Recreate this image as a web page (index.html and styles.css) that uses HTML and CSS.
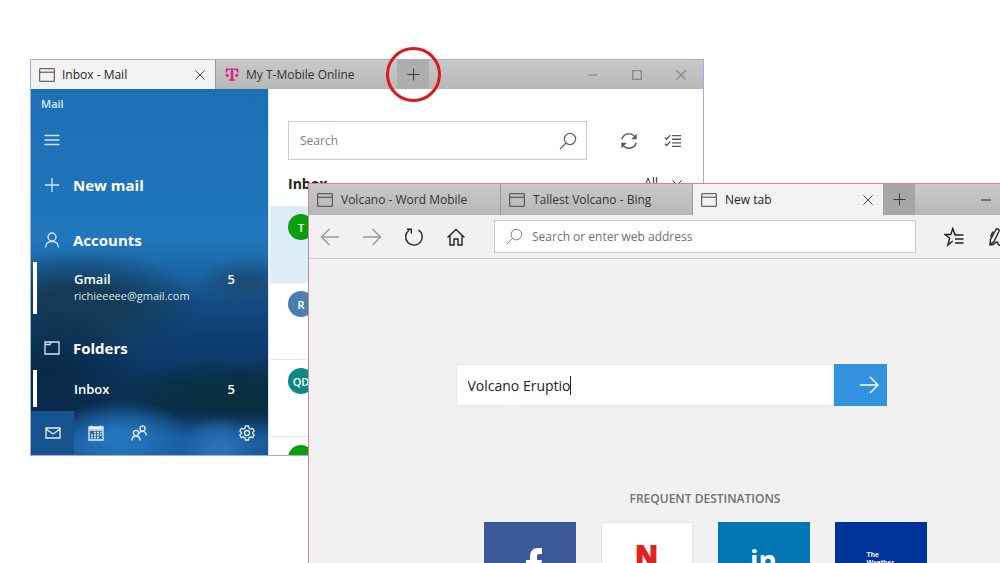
FILE: index.html
```html
<!DOCTYPE html>
<html lang="en">
<head>
<meta charset="utf-8">
<title>Tabbed windows</title>
<link rel="stylesheet" href="styles.css">
</head>
<body>
<svg class="defs" aria-hidden="true">
  <symbol id="i-window" viewBox="0 0 16 14"><path d="M.7.7h14.6v12.6H.7zM.7 4.200h14.600"/></symbol>
  <symbol id="i-close" viewBox="0 0 10 10"><path d="M.5.5l9 9M9.500.5l-9 9"/></symbol>
  <symbol id="i-plus" viewBox="0 0 14 14"><path d="M7 .5v13M.5 7h13"/></symbol>
  <symbol id="i-search" viewBox="0 0 18 18"><circle cx="11" cy="7" r="5.600"/><path d="M7 11l-6 6"/></symbol>
  <symbol id="i-arrow" viewBox="0 0 20 18"><path d="M1 9h18M11 1l8 8-8 8"/></symbol>
</svg>
<main class="desktop">
  <section class="mail" aria-label="Mail window">
    <header class="strip mail-strip">
      <div class="tab mail-tab active"><svg class="ic-win"><use href="#i-window"/></svg><span>Inbox - Mail</span><button class="close" aria-label="Close tab"><svg class="ic-x"><use href="#i-close"/></svg></button></div>
      <div class="tab mail-tab second"><svg class="ic-t" viewBox="0 0 16 16" aria-hidden="true"><path d="M1 1h14l.3 5h-1.200C13.800 3.500 12.500 2.300 9.500 2.200v9.800c0 1.500.6 1.900 2.200 2v1H4.300v-1c1.600-.1 2.200-.5 2.200-2V2.200C3.500 2.300 2.200 3.500 1.900 6H.7z"/><path d="M1 7.500h3v3H1zM12 7.500h3v3h-3z"/></svg><span>My T-Mobile Online</span></div>
      <div class="new-wrap"><button class="new" aria-label="New tab"><svg class="ic-plus"><use href="#i-plus"/></svg></button><i class="ring"></i></div>
      <div class="controls mail-controls">
        <button aria-label="Minimize"><svg viewBox="0 0 10 10"><path d="M.5 5h9"/></svg></button>
        <button aria-label="Maximize"><svg viewBox="0 0 10 10"><path d="M.7.7h8.600v8.600H.7z"/></svg></button>
        <button aria-label="Close"><svg viewBox="0 0 10 10"><path d="M.5.5l9 9M9.500.5l-9 9"/></svg></button>
      </div>
    </header>
    <div class="mail-body">
      <nav class="side">
        <p class="app">Mail</p>
        <button class="row burger" aria-label="Menu"><svg class="ic-side" viewBox="0 0 16 16"><path d="M.5 3.500h15M.5 8h15M.5 12.500h15"/></svg></button>
        <button class="row compose"><svg class="ic-side" viewBox="0 0 16 16"><path d="M8 1v14M1 8h14"/></svg>New mail</button>
        <button class="row accounts"><svg class="ic-side" viewBox="0 0 16 16"><circle cx="8" cy="5" r="4"/><path d="M1.500 15.500c.2-3.500 2.500-6 6.500-6s6.300 2.500 6.500 6"/></svg>Accounts</button>
        <a class="entry gmail" href="#"><span><b>Gmail</b><small>richieeeee@gmail.com</small></span><b class="count">5</b></a>
        <button class="row folders"><svg class="ic-side" viewBox="0 0 16 16"><path d="M1 2h14v12H1zM1 4.500h5L7.500 2"/></svg>Folders</button>
        <a class="entry inbox" href="#"><b>Inbox</b><b class="count">5</b></a>
        <div class="dock">
          <button class="on" aria-label="Mail"><svg viewBox="0 0 16 16"><path d="M1 3h14v10H1zM1 4l7 5 7-5"/></svg></button>
          <button aria-label="Calendar"><svg viewBox="0 0 16 16"><path d="M1 2h14v13H1zM1 3.500h14M1 5.200h14M3.500.5v2M12.500.5v2"/><path class="dots" d="M6 7.500h2M9 7.500h2M12 7.500h1.500M3 10h2M6 10h2M9 10h2M12 10h1.500M3 12.500h2M6 12.500h2M9 12.500h2"/></svg></button>
          <button aria-label="People"><svg viewBox="0 0 16 16"><circle cx="11.500" cy="3.500" r="2.600"/><path d="M8 8.500c1-2.800 6.500-3.300 7.300 2"/><circle cx="5" cy="8" r="2.600"/><path d="M.8 15.500c.4-6 8-6 8.400 0"/></svg></button>
          <button class="gear" aria-label="Settings"><svg viewBox="0 0 16 16"><path d="M6.500 1h3l.6 2.200 1.400.8 2.200-.6 1.500 2.600L13.600 7.600v.8l1.600 1.600-1.500 2.600-2.200-.6-1.400.8L9.500 15h-3l-.6-2.200-1.400-.8-2.200.6L.8 10l1.600-1.600v-.8L.8 6l1.500-2.600 2.200.6 1.400-.8z"/><circle cx="8" cy="8" r="2.500"/></svg></button>
        </div>
      </nav>
      <div class="list">
        <div class="tools">
          <label class="find"><input type="text" placeholder="Search" aria-label="Search mail"><svg class="ic-find"><use href="#i-search"/></svg></label>
          <button aria-label="Sync"><svg viewBox="0 0 20 20"><path d="M2 8c1.200-4 4.200-6 8-6 3 0 5.500 1.500 7 4M18 12c-1.200 4-4.200 6-8 6-3 0-5.500-1.500-7-4"/><path class="fill" d="M18.500 2v6h-6zM1.500 18v-6h6z"/></svg></button>
          <button aria-label="Select"><svg viewBox="0 0 20 20"><path d="M9 4h10M9 8h10M9 12h10M9 16h10M1 6l2 2 4-4.500M1 13l2 2 4-4.500"/></svg></button>
        </div>
        <div class="heading"><h2>Inbox</h2><button class="filter">All <svg viewBox="0 0 10 6"><path d="M.5.5L5 5 9.500.5"/></svg></button></div>
        <ul class="messages">
          <li class="selected"><span class="avatar green">T</span></li>
          <li><span class="avatar blue">R</span></li>
          <li><span class="avatar teal">QD</span></li>
          <li><span class="avatar green">T</span></li>
        </ul>
      </div>
    </div>
  </section>

  <section class="edge" aria-label="Browser window">
    <header class="strip edge-strip">
      <div class="tab edge-tab"><svg class="ic-win"><use href="#i-window"/></svg><span>Volcano - Word Mobile</span></div>
      <div class="tab edge-tab"><svg class="ic-win"><use href="#i-window"/></svg><span>Tallest Volcano - Bing</span></div>
      <div class="tab edge-tab active"><svg class="ic-win"><use href="#i-window"/></svg><span>New tab</span><button class="close" aria-label="Close tab"><svg class="ic-x"><use href="#i-close"/></svg></button></div>
      <button class="new" aria-label="New tab"><svg class="ic-plus"><use href="#i-plus"/></svg></button>
      <div class="controls edge-controls">
        <button aria-label="Minimize"><svg viewBox="0 0 10 10"><path d="M0 5h10"/></svg></button>
        <button aria-label="Maximize"><svg viewBox="0 0 10 10"><path d="M.5.5h9v9h-9z"/></svg></button>
        <button aria-label="Close"><svg viewBox="0 0 10 10"><path d="M.5.5l9 9M9.500.5l-9 9"/></svg></button>
      </div>
    </header>
    <div class="bar">
      <button class="dim" aria-label="Back"><svg viewBox="0 0 20 20"><path d="M19 10H1.500M9.500 2l-8 8 8 8"/></svg></button>
      <button class="dim" aria-label="Forward"><svg viewBox="0 0 20 20"><path d="M1 10h17.500M10.500 2l8 8-8 8"/></svg></button>
      <button aria-label="Refresh"><svg viewBox="0 0 20 20"><path d="M5 3.200a8.300 8.300 0 1 0 9.500-.3M3 2.200h4.300v4.300"/></svg></button>
      <button aria-label="Home"><svg viewBox="0 0 20 20"><path d="M1.500 10.500L10 2.500l8.500 8M4 8.500v9.500h4v-6h4v6h4V8.500"/></svg></button>
      <label class="address"><svg class="ic-addr"><use href="#i-search"/></svg><input type="text" placeholder="Search or enter web address" aria-label="Address"></label>
      <button aria-label="Favorites"><svg viewBox="0 0 20 20"><path d="M12.500 7.500h-1.700L8.800 1.500 6.800 7.500H1l4.700 3.800L3.800 18l5-4M11 8h8.500M11 12h8.500M11 16h8.500"/></svg></button>
      <button aria-label="Notes"><svg viewBox="0 0 20 20"><path d="M4 17.500l.5-5L10 2.500c1-1.500 3.800 0 3 1.800L8 14.500zM7 4.500l-2.500 5M4 17.500c4 2 5-3 7-2.500s0 3 2 3 2.500-2 5-2"/></svg></button>
      <button aria-label="Share"><svg viewBox="0 0 20 20"><path d="M3 9v9h14V9M10 13V2M6 6l4-4 4 4"/></svg></button>
      <button aria-label="More"><svg viewBox="0 0 20 20"><path d="M3 10h2M9 10h2M15 10h2"/></svg></button>
    </div>
    <div class="page">
      <form class="query">
        <label class="query-box"><input type="text" value="Volcano Eruptio" size="11" aria-label="Search the web"><i class="caret"></i></label>
        <button type="button" aria-label="Go"><svg viewBox="0 0 20 18"><use href="#i-arrow"/></svg></button>
      </form>
      <h3>FREQUENT DESTINATIONS</h3>
      <div class="tiles">
        <a class="tile facebook" href="#" aria-label="Facebook"><svg viewBox="0 0 92 92"><path d="M46 60V44h-4v-6h4v-3c0-6 3-9 8-9h4v6h-2.500c-2.200 0-2.500 1-2.500 2.500V38h5l-1 6h-4v16z"/></svg></a>
        <a class="tile netflix" href="#">N</a>
        <a class="tile linkedin" href="#">in</a>
        <a class="tile weather" href="#">The<br>Weather<br>Channel</a>
      </div>
    </div>
  </section>
</main>
</body>
</html>
```
FILE: styles.css
```css
* { box-sizing: border-box; }
body { margin: 0; background: #fff; font-family: "Open Sans", "Noto Sans", sans-serif; color: #222; }
button { border: 0; padding: 0; margin: 0; background: none; font: inherit; color: inherit; display: flex; align-items: center; justify-content: center; }
input { border: 0; padding: 0; margin: 0; background: none; font: inherit; color: inherit; outline: 0; min-width: 0; }
a { color: inherit; text-decoration: none; }
svg { fill: none; stroke: currentColor; flex: none; }
.defs { display: none; }
.desktop { position: relative; height: 100vh; overflow: hidden; }

.strip { display: flex; background: linear-gradient(#c9c9c9, #b7b7b7); }
.tab { display: flex; align-items: center; white-space: nowrap; padding-left: 8px; color: #333; }
.tab.active { background: #f2f2f2; color: #222; }
.tab .close { margin-left: auto; width: 30px; height: 100%; color: #444; }
.ic-win { width: 16px; height: 14px; margin-right: 8px; color: #444; }
.ic-x { width: 10px; height: 10px; }
.ic-plus { width: 13px; height: 13px; }
.new { height: 100%; width: 32px; background: #a6a6a6; color: #333; }
.controls { display: flex; margin-left: auto; }
.controls svg { width: 10px; height: 10px; }

.mail { position: absolute; left: 30px; top: 59px; width: calc(67% + 4px); height: 397px; border: 1px solid #a8aad8; background: #fff; display: flex; flex-direction: column; }
.mail-strip { height: 29px; font-size: 12px; flex: none; }
.mail-strip .ic-win { margin-right: 7px; }
.mail-tab { width: 184px; }
.second { padding-left: 9px; border-left: 1px solid #999; width: 182px; }
.ic-t { width: 14px; height: 15px; margin-right: 7px; fill: #d8207c; stroke: none; }
.new-wrap { position: relative; }
.mail-strip .new { background: #adadad; }
.ring { position: absolute; left: -11px; top: -13px; width: 55px; height: 55px; border: 3px solid #d91a1a; border-radius: 50%; }
.mail-controls { color: #888; stroke-width: 1.300; }
.mail-controls button { width: 44px; }
.mail-body { display: flex; flex: 1; min-height: 0; }

.side { width: 237px; color: #fff; display: flex; flex-direction: column;
  background:
    radial-gradient(ellipse 70px 40px at 90px 350px, #2375bd 20%, transparent 100%),
    radial-gradient(ellipse 40px 36px at 188px 362px, #2a72b2 20%, transparent 100%),
    radial-gradient(ellipse 130px 34px at 210px 306px, #082f40 30%, transparent 100%),
    radial-gradient(ellipse 90px 70px at 20px 285px, #082946 10%, transparent 100%),
    radial-gradient(ellipse 120px 58px at 50px 218px, #143a55 30%, transparent 100%),
    radial-gradient(ellipse 50px 26px at 216px 194px, #1a4a75 10%, transparent 100%),
    linear-gradient(#1d6fb5 0, #2077bb 150px, #1c65a4 185px, #124b83 215px, #0d3b6c 260px, #0a2d50 320px, #1a5c9d 350px, #1b5a98 100%); }
.app { margin: 0; height: 30px; line-height: 30px; padding-left: 10px; font-size: 11px; font-weight: 600; color: #dcecf8; }
.row { justify-content: flex-start; padding-left: 13px; font-size: 15px; font-weight: 700; text-align: left; }
.ic-side { width: 16px; height: 16px; margin-right: 13px; stroke-width: 1.300; color: #d5e6f5; }
.burger { height: 42px; }
.compose { height: 48px; }
.accounts { height: 53px; padding-top: 8px; }
.folders { height: 56px; padding-top: 12px; }
.entry { display: flex; justify-content: space-between; margin-left: 2px; border-left: 4px solid #fff; padding: 0 33px 0 37px; font-size: 13px; line-height: 18px; }
.entry small { display: block; font-size: 11px; line-height: 16px; font-weight: 400; color: #dbe5ee; }
.entry b { font-weight: 600; }
.gmail { height: 52px; padding-top: 8px; }
.inbox { height: 37px; align-items: center; }
.dock { margin-top: auto; height: 44px; display: flex; }
.dock button { width: 43px; }
.dock .on { background: #15548f; }
.dock .gear { margin-left: auto; }
.dock svg { width: 16px; height: 16px; stroke-width: 1.300; color: #e6eef6; }
.dots { stroke-width: 1.700; }

.list { flex: 1; min-width: 0; display: flex; flex-direction: column; border-left: 1px solid #d8e4f0; }
.tools { display: flex; padding: 32px 8px 0 19px; }
.find { flex: 1; display: flex; align-items: center; height: 39px; border: 1px solid #ccc; padding: 0 9px 0 11px; margin-right: 20px; font-size: 12px; }
.find input { flex: 1; }
.find input::placeholder { color: #808080; opacity: 1; }
.ic-find { width: 18px; height: 18px; color: #666; stroke-width: 1.300; }
.tools button { width: 44px; color: #555; }
.tools button svg { width: 18px; height: 18px; stroke-width: 1.500; }
.fill { fill: currentColor; stroke: none; }
.heading { display: flex; justify-content: space-between; align-items: center; height: 46px; padding: 1px 21px 0 19px; }
.heading h2 { margin: 0; font-size: 14px; font-weight: 700; }
.filter { font-size: 12px; gap: 14px; padding-bottom: 2px; }
.filter svg { width: 10px; height: 6px; }
.messages { list-style: none; margin: 0; padding: 0 0 0 1px; flex: 1; min-height: 0; overflow: hidden; }
.messages li { height: 77px; padding: 8px 0 0 18px; border-bottom: 1px solid #e4e4e4; }
.messages .selected { background: #dcecf9; }
.avatar { display: flex; align-items: center; justify-content: center; width: 26px; height: 26px; border-radius: 50%; color: #fff; font-size: 11px; font-weight: 600; }
.green { background: #0a9f0a; }
.blue { background: #4b7fb0; }
.teal { background: #0b8a82; }

.edge { position: absolute; left: 308px; top: 183px; right: -102px; bottom: -60px; border: 1px solid #cf8499; background: #f1f1f1; display: flex; flex-direction: column; }
.edge-strip { height: 31px; font-size: 12px; flex: none; }
.edge-tab { width: 192px; border-right: 1px solid #999; }
.edge-tab.active { width: 190px; border-right: 0; }
.edge-controls button { width: 46px; }
.bar { display: flex; align-items: center; height: 44px; border-bottom: 1px solid #d0d0d0; flex: none; }
.bar button { width: 42px; height: 42px; color: #222; }
.bar button svg { width: 20px; height: 20px; stroke-width: 1.400; }
.bar .dim { color: #999; }
.address { flex: 1; display: flex; align-items: center; height: 33px; margin: 0 17px; border: 1px solid #ccc; background: #fff; padding-left: 11px; font-size: 12px; }
.address input { flex: 1; }
.address input::placeholder { color: #707070; opacity: 1; }
.ic-addr { width: 17px; height: 17px; margin-right: 9px; color: #777; }
.page { display: flex; flex-direction: column; align-items: center; padding-top: 105px; }
.query { display: flex; width: 431px; height: 42px; margin-right: 68px; }
.query-box { flex: 1; display: flex; align-items: center; background: #fff; border: 1px solid #e6e6e6; padding-left: 11px; font-size: 14px; }
.query-box input { width: 102px; }
.caret { width: 1px; height: 19px; background: #222; }
.query button { width: 53px; background: #3392df; color: #fff; padding-left: 18px; }
.query button svg { width: 20px; height: 18px; stroke-width: 1.400; }
.page h3 { margin: 84px 0 14px; font-size: 12px; line-height: 18px; font-weight: 600; color: #707070; }
.tiles { display: flex; gap: 25px; }
.tile { width: 92px; height: 92px; display: flex; align-items: center; justify-content: center; color: #fff; font-weight: 700; }
.facebook { background: #3b5998; }
.facebook svg { width: 92px; height: 92px; fill: #fff; stroke: none; }
.netflix { background: #fff; border: 1px solid #e4e4e4; color: #e62020; font: 700 30px "Liberation Sans", sans-serif; -webkit-text-stroke: 2px #e62020; padding-bottom: 24px; }
.linkedin { background: #0077b5; font: 700 28px "Open Sans", sans-serif; padding-bottom: 17px; }
.weather { background: #003399; justify-content: flex-start; padding-left: 32px; font: 700 7px/8px "Liberation Sans", sans-serif; padding-bottom: 10px; }
```
